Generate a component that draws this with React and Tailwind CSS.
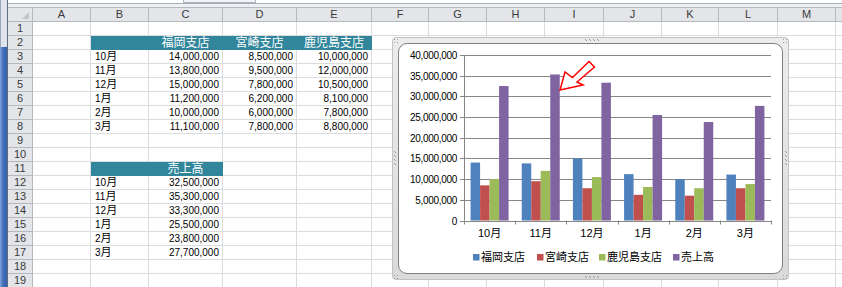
import React from 'react';

const COLS = [
  { id: 'A', w: 58 },
  { id: 'B', w: 58 },
  { id: 'C', w: 74 },
  { id: 'D', w: 74 },
  { id: 'E', w: 75 },
  { id: 'F', w: 57 },
  { id: 'G', w: 58 },
  { id: 'H', w: 58 },
  { id: 'I', w: 59 },
  { id: 'J', w: 58 },
  { id: 'K', w: 57 },
  { id: 'L', w: 59 },
  { id: 'M', w: 58 },
];

const MONTHS = [10, 11, 12, 1, 2, 3];
const BRANCH = [
  [14000000, 8500000, 10000000],
  [13800000, 9500000, 12000000],
  [15000000, 7800000, 10500000],
  [11200000, 6200000, 8100000],
  [10000000, 6000000, 7800000],
  [11100000, 7800000, 8800000],
];
const SALES = [32500000, 35300000, 33300000, 25500000, 23800000, 27700000];
const SERIES = [
  { name: '福岡支店', color: '#4f81bd' },
  { name: '宮崎支店', color: '#c0504d' },
  { name: '鹿児島支店', color: '#9bbb59' },
  { name: '売上高', color: '#8064a2' },
];

const fmt = (n) => n.toLocaleString('en-US');
const TEAL = 'bg-[#31869b] border-[#31869b] text-white';

// what goes in each cell, keyed "row:col"
function cellContent(r, c) {
  if (r === 2) {
    if (c === 'C') return { text: '福岡支店', head: true };
    if (c === 'D') return { text: '宮崎支店', head: true };
    if (c === 'E') return { text: '鹿児島支店', head: true };
    if (c === 'B') return { head: true };
  }
  if (r >= 3 && r <= 8) {
    const i = r - 3;
    if (c === 'B') return { month: MONTHS[i] };
    if (c === 'C') return { num: BRANCH[i][0] };
    if (c === 'D') return { num: BRANCH[i][1] };
    if (c === 'E') return { num: BRANCH[i][2] };
  }
  if (r === 11) {
    if (c === 'C') return { text: '売上高', head: true };
    if (c === 'B') return { head: true };
  }
  if (r >= 12 && r <= 17) {
    const i = r - 12;
    if (c === 'B') return { month: MONTHS[i] };
    if (c === 'C') return { num: SALES[i] };
  }
  return null;
}

function Cell({ w, r, c }) {
  const v = cellContent(r, c);
  const base = 'h-full border-r border-b flex items-center flex-shrink-0 overflow-hidden whitespace-nowrap';
  if (!v) return <div className={`${base} border-[#dadcdd]`} style={{ width: w }} />;
  if (v.head) {
    return (
      <div className={`${base} ${TEAL} justify-center text-[12px]`} style={{ width: w }}>
        {v.text}
      </div>
    );
  }
  if (v.month) {
    return (
      <div className={`${base} border-[#dadcdd] pl-[4px] text-black`} style={{ width: w }}>
        <span className="text-[10px]">{v.month}</span>
        <span className="text-[11px]">月</span>
      </div>
    );
  }
  return (
    <div className={`${base} border-[#dadcdd] justify-end pr-[3px] text-[10px] text-black`} style={{ width: w }}>
      {fmt(v.num)}
    </div>
  );
}

function Chart() {
  const X0 = 464;
  const X1 = 771;
  const Y0 = 220.5;
  const YT = 55;
  const scale = (Y0 - YT) / 40000000;
  const cw = (X1 - X0) / 6;
  const bw = 9.5;
  const off = (cw - 4 * bw) / 2;
  const gridY = (k) => Math.round(Y0 - k * 5000000 * scale) + 0.5;
  const values = MONTHS.map((_, i) => [...BRANCH[i], SALES[i]]);
  const legendX = [473, 537, 599, 673];

  return (
    <svg className="absolute left-0 top-0 pointer-events-none" width="842" height="287" viewBox="0 0 842 287">
      {/* gridlines + value axis */}
      {Array.from({ length: 9 }, (_, k) => (
        <g key={k}>
          {k > 0 && <line x1={X0} x2={X1} y1={gridY(k)} y2={gridY(k)} stroke="#868686" strokeWidth="1" />}
          <line x1={X0 - 4} x2={X0} y1={gridY(k)} y2={gridY(k)} stroke="#868686" strokeWidth="1" />
          <text
            x="457"
            y={gridY(k) + 3.5}
            textAnchor="end"
            fontSize="10"
            letterSpacing="-0.3"
            fontFamily="'Liberation Sans', sans-serif"
            fill="#000"
          >
            {fmt(k * 5000000)}
          </text>
        </g>
      ))}

      {/* bars */}
      {values.map((vals, i) =>
        vals.map((v, s) => {
          const h = v * scale;
          return (
            <rect
              key={`${i}-${s}`}
              x={X0 + i * cw + off + s * bw}
              y={Y0 - h}
              width={bw}
              height={h}
              fill={SERIES[s].color}
            />
          );
        })
      )}

      <line x1={X0 + 0.5} x2={X0 + 0.5} y1={YT} y2={Y0} stroke="#868686" strokeWidth="1" />
      <line x1={X0} x2={X1} y1={Math.round(Y0) + 0.5} y2={Math.round(Y0) + 0.5} stroke="#868686" strokeWidth="1" />
      {Array.from({ length: 7 }, (_, i) => (
        <line
          key={i}
          x1={Math.round(X0 + i * cw) + 0.5}
          x2={Math.round(X0 + i * cw) + 0.5}
          y1={Y0}
          y2={Y0 + 4}
          stroke="#868686"
          strokeWidth="1"
        />
      ))}

      {/* category labels */}
      {MONTHS.map((m, i) => (
        <text
          key={m}
          x={X0 + i * cw + cw / 2}
          y="237"
          textAnchor="middle"
          fontSize="11"
          fontFamily="'Liberation Sans', 'Noto Sans CJK JP', sans-serif"
          fill="#000"
        >
          {m}月
        </text>
      ))}

      {/* legend */}
      {SERIES.map((s, i) => (
        <g key={s.name}>
          <rect x={legendX[i]} y="254" width="6.5" height="6.5" fill={s.color} />
          <text
            x={legendX[i] + 8}
            y="261"
            fontSize="11"
            fontFamily="'Noto Sans CJK JP', sans-serif"
            fill="#000"
          >
            {s.name}
          </text>
        </g>
      ))}

      {/* red callout arrow */}
      <polygon
        points="560,90 565,72 572.5,77.5 589,61.5 594.5,67 577,82 583,85"
        fill="#fff"
        stroke="#ff0000"
        strokeWidth="1.5"
        strokeLinejoin="miter"
      />

      {/* sizing handles on the chart frame */}
      <g fill="#9a9a9a">
        {[0, 1, 2, 3].map((k) => (
          <g key={k}>
            <rect x={585 + k * 4} y="39" width="1" height="1" />
            <rect x={586 + k * 4} y="40" width="1" height="1" />
            <rect x={585 + k * 4} y="276" width="1" height="1" />
            <rect x={586 + k * 4} y="277" width="1" height="1" />
            <rect x="394" y={151 + k * 4} width="1" height="1" />
            <rect x="395" y={152 + k * 4} width="1" height="1" />
            <rect x="785" y={151 + k * 4} width="1" height="1" />
            <rect x="786" y={152 + k * 4} width="1" height="1" />
          </g>
        ))}
        {[
          [394, 39],
          [783, 39],
          [394, 275],
          [783, 275],
        ].map(([x, y]) => (
          <g key={`${x}-${y}`}>
            <rect x={x} y={y} width="1" height="1" />
            <rect x={x + 3} y={y} width="1" height="1" />
            <rect x={x} y={y + 3} width="1" height="1" />
            <rect x={x + 3} y={y + 3} width="1" height="1" />
          </g>
        ))}
      </g>
    </svg>
  );
}

export default function App() {
  const rows = Array.from({ length: 19 }, (_, i) => i + 1);

  return (
    <div className="relative w-[842px] h-[287px] overflow-hidden bg-white font-['Liberation_Sans','Noto_Sans_CJK_JP',sans-serif] flex">
      {/* window edge */}
      <div className="w-[8px] h-full flex flex-col flex-shrink-0 border-r border-[#5d6b80]">
        <div className="h-[47px] bg-[#dfe4ec] border-l border-[#9aa6b8]" />
        <div className="flex-1 bg-gradient-to-r from-[#7aa0d8] via-[#3f6db7] to-[#3562ab]" />
      </div>

      <div className="flex-1 flex flex-col min-w-0">
        {/* bottom of the formula bar */}
        <div className="h-[7px] flex-shrink-0 relative">
          <div className="h-[3px] bg-white" />
          <div className="h-[1px] bg-[#a5acb5]" />
          <div className="h-[3px] bg-[#eef0f3]" />
          <div className="absolute left-[175px] top-0 w-[73px] h-[3px] border-x border-b border-[#b0b5bc] bg-[#f3f4f6]" />
        </div>

        {/* column headers */}
        <div className="h-[15px] flex flex-shrink-0 bg-[#e3e5e9] text-[11px] text-[#3a3a3a]">
          <div className="w-[25px] h-full border-r border-y border-[#b5b8bd] relative flex-shrink-0">
            <svg className="absolute right-[3px] bottom-[2px]" width="7" height="7" viewBox="0 0 7 7">
              <polygon points="7,0 7,7 0,7" fill="#c3c6ca" />
            </svg>
          </div>
          {COLS.map((c) => (
            <div
              key={c.id}
              className="h-full border-r border-y border-[#b5b8bd] flex items-center justify-center flex-shrink-0"
              style={{ width: c.w }}
            >
              {c.id}
            </div>
          ))}
          <div className="flex-1 h-full border-y border-[#b5b8bd]" />
        </div>

        {/* rows */}
        {rows.map((r) => (
          <div key={r} className="h-[14px] flex flex-shrink-0">
            <div className="w-[25px] h-full bg-[#e3e5e9] border-r border-b border-[#b5b8bd] flex items-center justify-center text-[11px] text-[#3a3a3a] flex-shrink-0">
              {r}
            </div>
            {COLS.map((c) => (
              <Cell key={c.id} w={c.w} r={r} c={c.id} />
            ))}
            <div className="flex-1 h-full border-b border-[#dadcdd]" />
          </div>
        ))}
      </div>

      {/* embedded chart object */}
      <div className="absolute left-[392px] top-[37px] w-[397px] h-[243px] rounded-[4px] border border-[#c2c2c2] bg-gradient-to-b from-[#ececec] to-[#dadada] p-[5px]">
        <div className="w-full h-full rounded-[9px] border border-[#808080] bg-white" />
      </div>
      <Chart />
    </div>
  );
}
